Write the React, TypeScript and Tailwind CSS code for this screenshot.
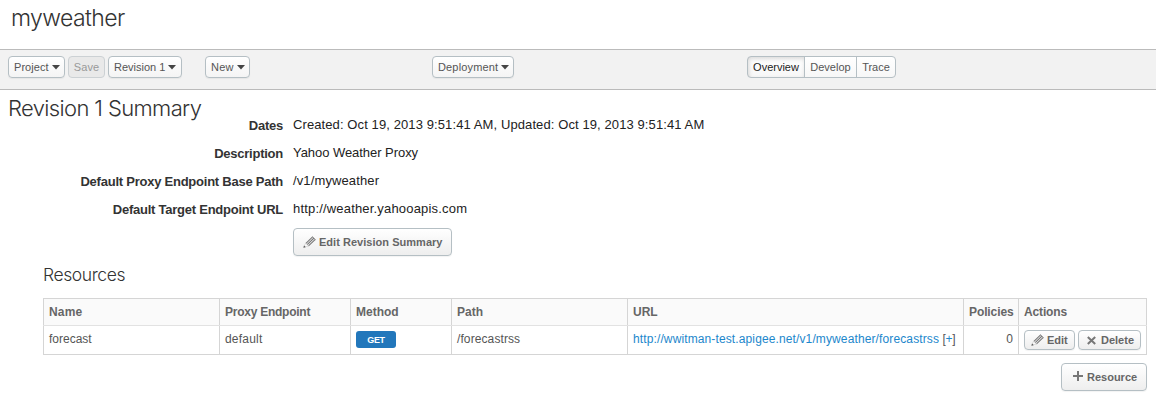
import type { ReactNode } from "react";

function Caret() {
  return (
    <svg width="8" height="6" viewBox="0 0 8 6" className="ml-[3px] shrink-0" fill="#444">
      <path d="M0 1h8L4 5.4z" />
    </svg>
  );
}

function Pencil({ className = "" }: { className?: string }) {
  return (
    <svg width="13" height="12" viewBox="0 0 13 12" className={`shrink-0 ${className}`} fill="none">
      <path d="M2.9 7.3 9.6 0.8M4.2 8.6 11 2M5.5 9.9 12.3 3.3" stroke="#777" strokeWidth="1.05" />
      <path d="M9.2 0.6 12.5 3.7" stroke="#777" strokeWidth="0.8" />
      <path d="M2.5 7.3 1.2 10.8 5.5 10z" fill="#fff" stroke="#aaa" strokeWidth="0.4" />
      <path d="M0.4 11.7 1 9.6l1.7 1.6z" fill="#555" />
    </svg>
  );
}

function Cross() {
  return (
    <svg width="9" height="9" viewBox="0 0 9 9" className="shrink-0" stroke="#777" strokeWidth="2">
      <path d="M0.8 1l7.4 7M8.2 1L0.8 8" />
    </svg>
  );
}

function Plus() {
  return (
    <svg width="10" height="10" viewBox="0 0 10 10" className="-mt-[2px] shrink-0" stroke="#777" strokeWidth="2">
      <path d="M0 5h10M5 0v10" />
    </svg>
  );
}

function MenuButton({ children, className = "" }: { children: ReactNode; className?: string }) {
  return (
    <button
      className={`flex h-[22px] shrink-0 items-center rounded-[4px] border border-[#b5bfc4] bg-linear-to-b from-white to-[#f4f4f4] pl-[5px] text-[11px] text-[#555] shadow-[0_1px_1px_rgba(0,0,0,0.05)] ${className}`}
    >
      {children}
    </button>
  );
}

function ActionButton({ children, className = "" }: { children: ReactNode; className?: string }) {
  return (
    <button
      className={`flex shrink-0 items-center border border-[#b5bfc4] bg-linear-to-b from-white to-[#eee] text-[11px] font-bold text-[#666] shadow-[0_1px_1px_rgba(0,0,0,0.05)] ${className}`}
    >
      {children}
    </button>
  );
}

function Field({ label, value, tracking }: { label: string; value: string; tracking: string }) {
  return (
    <div className="flex h-7 text-[#222]">
      <div className="w-[283px] text-right text-[13px] leading-[28px] font-bold tracking-[-0.24px] text-[#333]">{label}</div>
      <div className={`ml-[10px] text-[13px] leading-[26px] ${tracking}`}>{value}</div>
    </div>
  );
}

const th = "border border-[#d5d5d5] border-b-[#e2e2e2] px-[5px] text-left";
const td = "border border-[#d5d5d5] px-[5px] pb-[2px]";

export default function App() {
  return (
    <div className="h-[401px] w-[1156px] overflow-hidden bg-white font-['Liberation_Sans',Arial,sans-serif] whitespace-nowrap">
      <header className="h-[49px] pl-[11px]">
        <h1 className="pt-[3px] font-['Inter',sans-serif] text-[23px] leading-[30px] font-light tracking-[-0.6px] text-[#333]">myweather</h1>
      </header>

      <nav className="flex h-[41px] border-y border-[#bbb] bg-[#f2f2f2] pt-[6px] pl-2">
        <MenuButton className="w-[57px] tracking-[0.05px]">Project<Caret /></MenuButton>
        <button className="ml-[3px] h-[22px] w-[37px] rounded-[4px] border border-[#ccd1d4] bg-[#e9e9e9] text-[11px] tracking-[0.1px] text-[#999]">Save</button>
        <MenuButton className="ml-[3px] w-[74px]">Revision 1<Caret /></MenuButton>
        <MenuButton className="ml-[23px] w-[45px] tracking-[0.2px]">New<Caret /></MenuButton>
        <MenuButton className="ml-[182px] w-[82px] tracking-[0.15px]">Deployment<Caret /></MenuButton>
        <div className="ml-[233px] flex h-[22px] w-[149px] overflow-hidden rounded-[4px] border border-[#b5bfc4] bg-linear-to-b from-white to-[#f7f7f7] text-[11px] text-[#555]">
          <button className="w-[57px] border-r border-[#b5bfc4] text-[#222] shadow-[inset_1px_2px_4px_rgba(0,0,0,0.15)]">Overview</button>
          <button className="w-[52px] border-r border-[#b5bfc4]">Develop</button>
          <button className="w-[38px]">Trace</button>
        </div>
      </nav>

      <section className="flex h-[22px] pl-[8px]">
        <h2 className="pt-[3px] font-['Inter',sans-serif] text-[22px] leading-[30px] font-light tracking-[-0.63px] text-[#333]">Revision 1 Summary</h2>
      </section>
      <section>
        <Field label="Dates" value="Created: Oct 19, 2013 9:51:41 AM, Updated: Oct 19, 2013 9:51:41 AM" tracking="tracking-[0.1px]" />
        <Field label="Description" value="Yahoo Weather Proxy" tracking="tracking-[-0.05px]" />
        <Field label="Default Proxy Endpoint Base Path" value="/v1/myweather" tracking="tracking-[0.12px]" />
        <Field label="Default Target Endpoint URL" value="http://weather.yahooapis.com" tracking="tracking-[0.18px]" />
        <ActionButton className="mt-[4px] ml-[293px] h-7 w-[159px] rounded-[4px] pl-[9px] tracking-[0.03px]">
          <Pencil className="mr-[3px]" />Edit Revision Summary
        </ActionButton>
      </section>

      <section className="w-[1147px] pl-[43px]">
        <h3 className="mt-[6px] h-[36px] font-['Inter',sans-serif] text-[17.5px] leading-[26px] font-light tracking-[-0.4px] text-[#333]">Resources</h3>
        <table className="w-[1104px] table-fixed border-collapse text-[12px] text-[#555]">
          <colgroup>
            <col className="w-[176px]" /><col className="w-[131px]" /><col className="w-[101px]" />
            <col className="w-[176px]" /><col className="w-[336px]" /><col className="w-[55px]" /><col />
          </colgroup>
          <thead className="bg-[#fafafa] text-[#666]">
            <tr className="h-[27px]">
              <th className={`${th} tracking-[0.2px]`}>Name</th>
              <th className={`${th} tracking-[-0.25px]`}>Proxy Endpoint</th>
              <th className={th}>Method</th>
              <th className={th}>Path</th>
              <th className={th}>URL</th>
              <th className={`${th} tracking-[-0.1px]`}>Policies</th>
              <th className={`${th} tracking-[-0.14px]`}>Actions</th>
            </tr>
          </thead>
          <tbody>
            <tr className="h-[29px]">
              <td className={td}>forecast</td>
              <td className={`${td} tracking-[0.2px]`}>default</td>
              <td className={td}>
                <span className="block h-[17px] w-[40px] rounded-[3px] bg-[#2277bb] text-center text-[9px] leading-[18px] font-bold tracking-[-0.3px] text-white">GET</span>
              </td>
              <td className={`${td} tracking-[0.1px]`}>/forecastrss</td>
              <td className={`${td} tracking-[0.12px] text-[#1c87cc]`}>
                http://wwitman-test.apigee.net/v1/myweather/forecastrss <span className="tracking-[-0.3px] text-[#555]">[<span className="text-[#1c87cc]">+</span>]</span>
              </td>
              <td className={`${td} text-right`}>0</td>
              <td className={td}>
                <div className="flex gap-[3px] pt-[2px]">
                  <ActionButton className="h-5 w-[51px] rounded-[4px] pl-[6px]"><Pencil className="mr-[3px]" />Edit</ActionButton>
                  <ActionButton className="h-5 w-[63px] gap-[5px] rounded-[4px] pl-[8px]"><Cross />Delete</ActionButton>
                </div>
              </td>
            </tr>
          </tbody>
        </table>
        <ActionButton className="mt-[8px] ml-auto h-7 w-[86px] gap-[4px] rounded-[4px] pl-[11px]"><Plus />Resource</ActionButton>
      </section>
    </div>
  );
}
